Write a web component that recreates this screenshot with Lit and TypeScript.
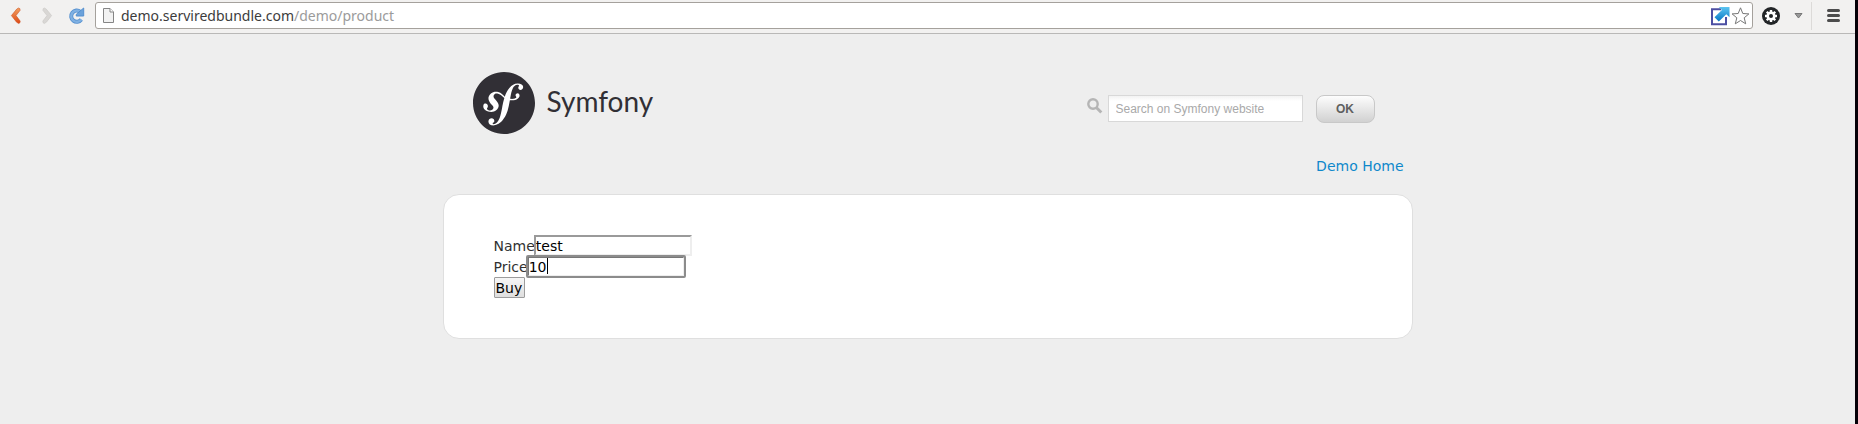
import { LitElement, html, css, svg } from "lit";
import { customElement, state } from "lit/decorators.js";

@customElement("browser-bar")
class BrowserBar extends LitElement {
  static styles = css`
    :host {
      display: flex;
      align-items: center;
      box-sizing: border-box;
      height: 34px;
      padding: 0 14px 2px 8px;
      background: #f2f1f0;
      border-bottom: 1px solid #b9b8b7;
      font-family: "Noto Sans", "Open Sans", sans-serif;
    }
    button {
      display: block;
      padding: 0;
      border: 0;
      background: none;
    }
    svg {
      display: block;
    }
    .nav {
      display: flex;
      gap: 10px;
      margin-right: 10px;
    }
    .address {
      flex: 1;
      display: flex;
      align-items: center;
      box-sizing: border-box;
      height: 27px;
      padding: 0 1px 0 6px;
      background: #fff;
      border: 1px solid #a5a19c;
      border-radius: 3px;
    }
    .url {
      flex: 1;
      margin-left: 6px;
      font-size: 14px;
      line-height: 24px;
      color: #9b9b9b;
      text-decoration: none;
    }
    .host {
      color: #3c3c3c;
    }
    .tools {
      display: flex;
      align-items: center;
    }
    .gear {
      margin-left: 8px;
    }
    .caret {
      margin-left: 13px;
    }
    .menu {
      box-sizing: border-box;
      height: 28px;
      margin-left: 8px;
      padding-left: 14px;
      border-left: 1px solid #dcdad8;
    }
  `;

  render() {
    const teeth = [0, 45, 90, 135, 180, 225, 270, 315];
    return html`
      <div class="nav">
        <button aria-label="Back">
          <svg width="20" height="20" viewBox="0 0 20 20">
            <defs>
              <linearGradient id="o" x1="0" y1="0" x2="0" y2="1">
                <stop offset="0" stop-color="#f2a060" />
                <stop offset="1" stop-color="#dd4814" />
              </linearGradient>
            </defs>
            <path d="M10.6 2q1.8.2 1.5 2.3L8 9.6l4.2 5.5q.2 2.1-1.5 2.4L8.600 16.200 3.400 9.600 8.800 3z" fill="url(#o)" stroke="#cf5423" stroke-width=".6" />
          </svg>
        </button>
        <button aria-label="Forward" disabled>
          <svg width="20" height="20" viewBox="0 0 20 20">
            <path d="M6.400 2q-1.800.2-1.500 2.300L9 9.600l-4.200 5.500q-.2 2.100 1.500 2.400l2.100-1.300 5.200-6.600L8.200 3z" fill="#d9d7d5" stroke="#c9c7c5" stroke-width=".6" />
          </svg>
        </button>
        <button aria-label="Reload">
          <svg width="17" height="20" viewBox="0 0 17 20">
            <path d="M13.300 13.500A5.600 5.600 0 1 1 12.300 5.800" fill="none" stroke="#5590cf" stroke-width="4" />
            <path d="M13.300 13.500A5.600 5.600 0 1 1 12.300 5.800" fill="none" stroke="#7fb0e2" stroke-width="2.400" />
            <path d="M15.700 2v8H8.200l.2-1.800z" fill="#6ba2db" stroke="#5590cf" />
          </svg>
        </button>
      </div>
      <div class="address">
        <svg width="13" height="17" viewBox="0 0 13 17">
          <path d="M1.500 1.500h6.500l3.500 3.500v10.500h-10z" fill="#f2f2f2" stroke="#858585" />
          <path d="M8 1.500V5h3.500" fill="#fff" stroke="#858585" />
        </svg>
        <a class="url" href="#"><span class="host">demo.serviredbundle.com</span>/demo/product</a>
        <svg width="20" height="20" viewBox="0 0 20 20">
          <defs>
            <linearGradient id="b" x1="0" y1="0" x2="0" y2="1">
              <stop offset="0" stop-color="#5cc5f1" />
              <stop offset="1" stop-color="#0877c4" />
            </linearGradient>
          </defs>
          <path d="M11 3.200H2v15h14V11" fill="none" stroke="#4c4fa3" stroke-width="2" />
          <path d="M8.800 1H19.500v10.200l-3.200-2.900-7.500 7.200-4.300-4.300 7.400-7.200z" fill="url(#b)" />
        </svg>
        <svg width="21" height="20" viewBox="0 0 21 20">
          <path d="M10.500 1.800l2.300 5.700 6.100.4-4.700 3.900 1.500 6-5.200-3.300-5.200 3.300 1.500-6L2.100 7.900l6.100-.4z" fill="#fff" stroke="#777" stroke-linejoin="round" />
        </svg>
      </div>
      <div class="tools">
        <button class="gear" aria-label="Settings extension">
          <svg width="20" height="20" viewBox="-10 -10 20 20">
            <circle r="9" fill="#222527" />
            <g fill="#fff">
              <circle r="4.600" />
              ${teeth.map((a) => svg`<rect x="-1.200" y="-6" width="2.400" height="3" transform="rotate(${a})" />`)}
            </g>
            <circle r="2" fill="#222527" />
          </svg>
        </button>
        <button class="caret" aria-label="More">
          <svg width="9" height="6" viewBox="0 0 9 6">
            <path d="M1 .5h7L4.500 5z" fill="#999" stroke="#777" />
          </svg>
        </button>
        <button class="menu" aria-label="Menu">
          <svg width="15" height="15" viewBox="0 0 15 15">
            <path d="M2.500 2.500h10M2.500 7.500h10M2.500 12.500h10" stroke="#4c4c4c" stroke-width="3" stroke-linecap="round" />
          </svg>
        </button>
      </div>
    `;
  }
}

@customElement("site-header")
class SiteHeader extends LitElement {
  static styles = css`
    :host {
      display: block;
    }
    .top {
      display: flex;
      align-items: flex-start;
      justify-content: space-between;
      padding: 38px 38px 0 30px;
    }
    .logo {
      display: flex;
      align-items: flex-start;
      gap: 12px;
      color: #312f35;
      font: 28px/58px Lato, sans-serif;
      text-decoration: none;
    }
    .search {
      display: flex;
      align-items: flex-start;
      margin-top: 23px;
      font-family: "Liberation Sans", Arial, sans-serif;
    }
    .search label {
      padding: 2px 5px 0 0;
    }
    svg {
      display: block;
    }
    .query {
      box-sizing: border-box;
      width: 195px;
      height: 27px;
      margin: 0 13px 0 0;
      padding: 2px 7px;
      border: 1px solid #d8d8d8;
      border-radius: 0;
      background: linear-gradient(#f2f2f2, #fff 5px);
      font: 12px "Liberation Sans", Arial, sans-serif;
      color: #555;
      outline: 0;
    }
    .query::placeholder {
      color: #a9a9a9;
      opacity: 1;
    }
    .ok {
      box-sizing: border-box;
      width: 59px;
      height: 28px;
      padding: 0;
      border: 1px solid #c8c8c8;
      border-radius: 8px;
      background: linear-gradient(#fdfdfd, #d1d1d1);
      font: bold 12px "Liberation Sans", Arial, sans-serif;
      color: #5f5f5f;
    }
    nav {
      padding: 22px 9px 18px;
      text-align: right;
      font: 14px/20px "DejaVu Sans", Verdana, sans-serif;
    }
    nav a {
      color: #0f88cb;
      text-decoration: none;
    }
  `;

  render() {
    return html`
      <div class="top">
        <a class="logo" href="#">
          <svg width="62" height="62" viewBox="0 0 24 24" aria-hidden="true">
            <path fill="#fff" d="M3.500 3.500h17v17h-17z" />
            <path
              fill="#312f35"
              d="M24 12c0 6.628-5.372 12-12 12S0 18.628 0 12 5.372 0 12 0s12 5.372 12 12zm-6.753-7.561c-1.220.042-2.283.715-3.075 1.644-.878 1.020-1.461 2.229-1.881 3.461-.753-.614-1.332-1.414-2.539-1.761-.966-.297-2.015-.105-2.813.514-.410.319-.710.757-.861 1.254-.360 1.176.381 2.225.719 2.600l.737.790c.150.154.519.560.339 1.138-.193.631-.951 1.037-1.732.799-.348-.106-.848-.366-.734-.730.045-.150.152-.263.210-.391.052-.110.077-.194.095-.242.141-.465-.053-1.070-.551-1.223-.465-.143-.939-.030-1.125.566-.209.680.117 1.913 1.860 2.449 2.040.628 3.765-.484 4.009-1.932.153-.907-.255-1.582-1.006-2.447l-.612-.677c-.371-.370-.497-1.002-.114-1.485.324-.409.785-.584 1.539-.379 1.103.300 1.594 1.063 2.412 1.680-.338 1.110-.560 2.223-.759 3.222l-.123.746c-.585 3.070-1.033 4.757-2.194 5.726-.234.166-.570.416-1.073.434-.266.005-.352-.176-.355-.257-.006-.184.150-.271.255-.353.154-.083.390-.224.372-.674-.016-.532-.456-.994-1.094-.973-.477.017-1.203.465-1.176 1.286.028.850.819 1.485 2.012 1.444.638-.021 2.062-.281 3.464-1.949 1.633-1.911 2.090-4.101 2.434-5.706l.383-2.117c.213.024.441.042.690.048 2.032.044 3.049-1.010 3.064-1.776.010-.464-.304-.921-.744-.910-.386.009-.718.278-.806.654-.094.428.646.813.068 1.189-.410.266-1.146.452-2.184.300l.188-1.042c.386-1.976.859-4.407 2.661-4.467.132-.007.612.006.623.323.003.105-.022.134-.147.375-.115.155-.174.345-.168.537.017.504.400.836.957.816.743-.023.955-.748.945-1.119-.032-.874-.952-1.424-2.170-1.386z"
            />
          </svg>
          <span>Symfony</span>
        </a>
        <form class="search" @submit=${(e: Event) => e.preventDefault()}>
          <label for="q" aria-label="Search">
            <svg width="17" height="18" viewBox="0 0 17 18">
              <circle cx="7" cy="7" r="4.700" fill="none" stroke="#b5b5b5" stroke-width="2.400" />
              <path d="M10.300 10.500l5 5" stroke="#b5b5b5" stroke-width="3" />
            </svg>
          </label>
          <input class="query" id="q" type="search" placeholder="Search on Symfony website" />
          <button class="ok">OK</button>
        </form>
      </div>
      <nav><a href="#">Demo Home</a></nav>
    `;
  }
}

@customElement("product-form")
class ProductForm extends LitElement {
  static styles = css`
    :host {
      display: block;
      padding: 40px 50px;
      background: #fff;
      border: 1px solid #dfdfdf;
      border-radius: 16px;
      font: 14px/21px "DejaVu Sans", Verdana, sans-serif;
      color: #313131;
    }
    .row {
      display: flex;
      align-items: flex-start;
      height: 21px;
    }
    label {
      margin-right: -1px;
      line-height: 23px;
    }
    input,
    button {
      box-sizing: border-box;
      height: 21px;
      margin: 0;
      font: inherit;
      line-height: 17px;
      color: #000;
    }
    input {
      width: 158px;
      padding: 0;
      border: 2px solid;
      border-color: #9a9a9a #eee #eee #9a9a9a;
      background: #fff;
      outline: 0;
    }
    .active {
      border-color: #777 #eee #eee #777;
      border-radius: 1px;
      outline: 2px solid #8c8c8c;
      outline-offset: -1px;
      background: linear-gradient(#000, #000) 18px 0 / 1px 16px no-repeat #fff;
      caret-color: transparent;
    }
    button {
      padding: 1px 2px 0 1px;
      border: 1px solid #9c9c9c;
      border-radius: 1px;
      background: linear-gradient(#f6f6f6, #dedede);
    }
  `;

  @state() private name = "test";
  @state() private price = "10";

  render() {
    return html`
      <form @submit=${(e: Event) => e.preventDefault()}>
        <div class="row">
          <label for="name">Name</label>
          <input id="name" type="text" .value=${this.name} />
        </div>
        <div class="row">
          <label for="price">Price</label>
          <input id="price" class="active" type="text" .value=${this.price} />
        </div>
        <div class="row"><button>Buy</button></div>
      </form>
    `;
  }
}

@customElement("app-root")
class AppRoot extends LitElement {
  static styles = css`
    :host {
      display: block;
      box-sizing: border-box;
      min-height: 100vh;
      background: #eee;
      border-right: 3px solid #050008;
    }
    main {
      box-sizing: border-box;
      max-width: 970px;
      margin: 0 auto;
    }
  `;

  render() {
    return html`
      <browser-bar></browser-bar>
      <main>
        <site-header></site-header>
        <product-form></product-form>
      </main>
    `;
  }
}
